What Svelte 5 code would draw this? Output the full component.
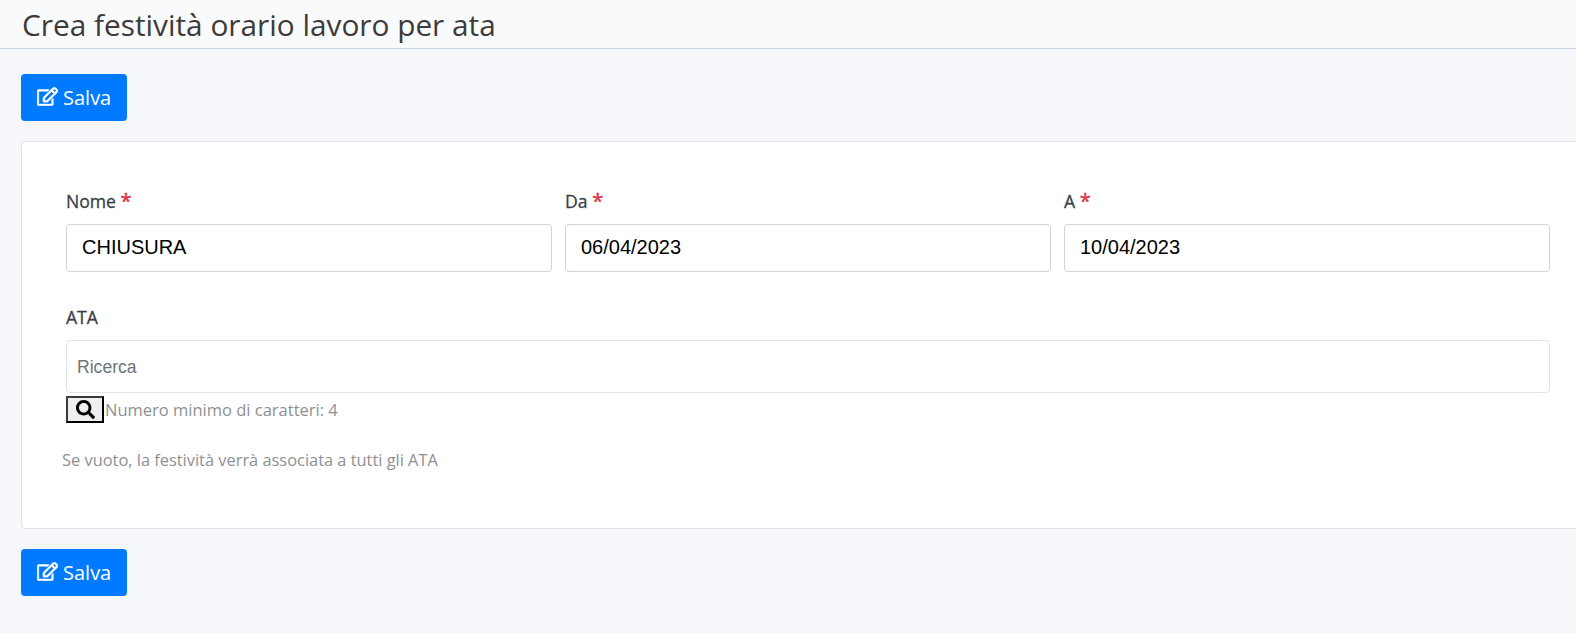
<script>
  const editPath =
    "M402.3 344.9l32-32c5-5 13.7-1.5 13.7 5.7V464c0 26.5-21.5 48-48 48H48c-26.5 0-48-21.5-48-48V112c0-26.5 21.5-48 48-48h273.5c7.1 0 10.7 8.6 5.7 13.7l-32 32c-1.5 1.5-3.5 2.3-5.7 2.3H48v352h352V350.5c0-2.1.8-4.1 2.3-5.6zm156.6-201.8L296.3 405.7l-90.4 10c-26.2 2.9-48.5-19.2-45.6-45.6l10-90.4L432.9 17.1c22.9-22.9 59.9-22.9 82.7 0l43.2 43.2c22.9 22.9 22.9 60 .1 82.8zM460.1 174L402 115.9 216.2 301.8l-7.3 65.3 65.3-7.3L460.1 174zm64.8-79.7l-43.2-43.2c-4.1-4.1-10.8-4.1-14.8 0L436 82l58.1 58.1 30.9-30.9c4-4.2 4-10.8-.1-14.9z";

  const fields = [
    { label: "Nome", value: "CHIUSURA" },
    { label: "Da", value: "06/04/2023" },
    { label: "A", value: "10/04/2023" },
  ];
</script>

{#snippet saveButton()}
  <button class="save" type="button">
    <svg class="edit-icon" viewBox="0 0 576 512" aria-hidden="true"><path fill="currentColor" stroke="currentColor" stroke-width="14" d={editPath} /></svg>
    Salva
  </button>
{/snippet}

<div class="page">
  <header class="topbar">
    <h1>Crea festività orario lavoro per ata</h1>
  </header>

  <main class="content">
    {@render saveButton()}

    <section class="card">
      <div class="row">
        {#each fields as f}
          <div class="field">
            <label class="lbl" for={f.label}>{f.label} <span class="req">*</span></label>
            <input id={f.label} class="txt" type="text" value={f.value} />
          </div>
        {/each}
      </div>

      <div class="ata">
        <label class="lbl" for="ata">ATA</label>
        <input id="ata" class="search" type="text" placeholder="Ricerca" />
        <div class="hint-row">
          <button class="search-btn" type="button" aria-label="Cerca">
            <svg viewBox="0 0 512 512" aria-hidden="true"><path fill="currentColor" d="M505 442.7L405.3 343c-4.5-4.5-10.6-7-17-7H372c27.6-35.3 44-79.7 44-128C416 93.1 322.9 0 208 0S0 93.1 0 208s93.1 208 208 208c48.3 0 92.7-16.4 128-44v16.3c0 6.4 2.5 12.5 7 17l99.7 99.7c9.4 9.4 24.6 9.4 33.9 0l28.3-28.3c9.4-9.4 9.4-24.6.1-34zM208 336c-70.7 0-128-57.2-128-128 0-70.7 57.2-128 128-128 70.7 0 128 57.2 128 128 0 70.7-57.2 128-128 128z" /></svg>
          </button>
          <span class="muted">Numero minimo di caratteri: 4</span>
        </div>
        <p class="muted note">Se vuoto, la festività verrà associata a tutti gli ATA</p>
      </div>
    </section>

    {@render saveButton()}
  </main>
</div>

<style>
  :global(body) {
    background: #f5f7fb;
    overflow: hidden;
  }

  .page {
    width: 1576px;
    height: 633px;
    overflow: hidden;
    font-family: "Open Sans", sans-serif;
    color: #3b3f45;
  }

  .topbar {
    height: 48px;
    box-sizing: content-box;
    padding-left: 22px;
    background: #f9fafc;
    border-bottom: 1px solid #c9d8e4;
  }

  h1 {
    margin: 0;
    font-size: 29.8px;
    font-weight: 400;
    line-height: 49px;
    color: #3e3a39;
  }

  .content {
    padding: 25px 0 0 21px;
  }

  .save {
    display: flex;
    align-items: center;
    gap: 5px;
    width: 106px;
    height: 47px;
    padding: 0 0 0 16px;
    border: none;
    border-radius: 4px;
    background: #007bff;
    color: #fff;
    font-family: inherit;
    font-size: 20px;
  }

  .edit-icon {
    width: 21px;
    height: 19px;
    margin-bottom: 3px;
  }

  .card {
    width: 1600px;
    height: 386px;
    box-sizing: content-box;
    margin: 20px 0 20px;
    padding: 0;
    background: #fff;
    border: 1px solid #dfe1e6;
    border-radius: 4px;
  }

  .row {
    display: grid;
    grid-template-columns: repeat(3, 486px);
    column-gap: 13px;
    padding: 48px 0 0 44px;
  }

  .field {
    display: flex;
    flex-direction: column;
  }

  .lbl {
    display: block;
    font-size: 17.6px;
    font-weight: 500;
    line-height: 22px;
    margin-bottom: 12px;
    color: #3a3f4a;
    -webkit-text-stroke: 0.3px #3a3f4a;
  }

  .req {
    color: #dc3545;
    font-size: 20px;
    line-height: 16px;
    -webkit-text-stroke: 0.5px #dc3545;
  }

  .txt {
    box-sizing: border-box;
    width: 100%;
    height: 48px;
    padding: 0 15px 2px;
    border: 1px solid #ced4da;
    border-radius: 4px;
    background: #fff;
    font-family: "Liberation Sans", sans-serif;
    font-size: 20px;
    color: #000;
    outline: none;
  }

  .ata {
    padding: 34px 0 0 44px;
  }

  .search {
    display: block;
    box-sizing: border-box;
    width: 1484px;
    height: 53px;
    padding: 2px 10px 0;
    border: 1px solid #dce6ea;
    border-radius: 4px;
    background: #fff;
    font-family: "Liberation Sans", sans-serif;
    font-size: 17.6px;
    outline: none;
  }

  .search::placeholder {
    color: #6c757d;
    opacity: 1;
  }

  .hint-row {
    display: flex;
    align-items: center;
    gap: 1px;
    margin-top: 3px;
  }

  .search-btn {
    display: flex;
    align-items: center;
    justify-content: center;
    box-sizing: border-box;
    width: 38px;
    height: 27px;
    padding: 0;
    border: 2px solid;
    border-color: #3c3c3c #000 #000 #3c3c3c;
    background: #efefef;
    color: #000;
  }

  .search-btn svg {
    width: 19px;
    height: 19px;
  }

  .muted {
    font-size: 16.5px;
    color: #8e9094;
  }

  .note {
    font-size: 16.4px;
    margin: 25px 0 0 -4px;
    line-height: 24px;
  }
</style>
